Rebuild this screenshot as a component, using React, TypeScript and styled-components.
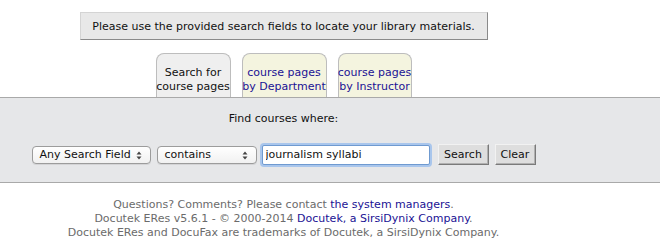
import React from "react"
import styled, { createGlobalStyle } from "styled-components"

const GlobalStyle = createGlobalStyle`
  body {
    margin: 0;
    background: #fff;
    font-family: "DejaVu Sans", Verdana, sans-serif;
    color: #000;
  }
`

const Page = styled.div`
  width: 660px;
`

const Column = styled.div`
  width: 567px;
  display: flex;
  flex-direction: column;
  align-items: center;
`

const Notice = styled.div`
  margin-top: 12px;
  width: 406px;
  height: 26px;
  box-sizing: content-box;
  background: #e8e8e8;
  border: 1px solid;
  border-color: #d4d4d4 #8a8a8a #8a8a8a #d4d4d4;
  display: flex;
  align-items: center;
  justify-content: center;
  white-space: nowrap;
  font-size: 11px;
  color: #111;
`

const Tabs = styled.div`
  margin-top: 13px;
  display: flex;
  gap: 11px;
  align-items: flex-end;
`

const Tab = styled.div<{ $active?: boolean; $w: number }>`
  width: ${(p) => p.$w}px;
  height: 44px;
  border: 1px solid #bdbdbd;
  border-bottom: none;
  border-radius: 8px 8px 0 0;
  background: ${(p) => (p.$active ? "#efefef" : "#f4f4df")};
  color: ${(p) => (p.$active ? "#111" : "#1a1294")};
  font-size: 11px;
  line-height: 14px;
  display: flex;
  align-items: flex-end;
  justify-content: center;
  text-align: center;
  padding-bottom: 3px;
  box-sizing: border-box;
  white-space: nowrap;
`

const Panel = styled.div`
  background: #e6e7e9;
  border-top: 1px solid #a9a9a9;
  border-bottom: 1px solid #a9a9a9;
  height: 84px;
`

const PanelInner = styled(Column)`
  padding-top: 14px;
`

const Prompt = styled.div`
  font-size: 11px;
  color: #111;
  margin-bottom: 19px;
`

const Controls = styled.div`
  display: flex;
  align-items: center;
  gap: 6px;
`

const SelectBox = styled.div<{ $w: number }>`
  position: relative;
  width: ${(p) => p.$w}px;
  height: 18px;
  box-sizing: border-box;
  border: 1px solid #9c9c9c;
  border-radius: 4px;
  background: linear-gradient(#ffffff, #f1f1f1);
  box-shadow: 0 1px 0 rgba(0, 0, 0, 0.08);
  font-size: 11px;
  line-height: 16px;
  padding-left: 7px;
  color: #111;
`

const Arrows = styled.svg`
  position: absolute;
  right: 8px;
  top: 4px;
`

const SearchInput = styled.input`
  width: 168px;
  height: 20px;
  box-sizing: border-box;
  border: 1px solid #6f9ad0;
  box-shadow: 0 0 0 2px #a9c6ec;
  border-radius: 2px;
  font-family: inherit;
  font-size: 11px;
  padding: 0 3px;
  margin: 0 2px 0 -1px;
  outline: none;
  color: #111;
`

const Button = styled.button<{ $w: number }>`
  width: ${(p) => p.$w}px;
  height: 21px;
  padding: 0;
  background: #dedede;
  border: 1px solid;
  border-color: #f2f2f2 #7a7a7a #7a7a7a #f2f2f2;
  box-shadow: inset -1px -1px 0 #b0b0b0;
  font-family: inherit;
  font-size: 11px;
  color: #111;
`

const Footer = styled(Column)`
  margin-top: 15px;
  font-size: 11px;
  line-height: 14px;
  color: #6b6b6b;
  text-align: center;
`

const Link = styled.a`
  color: #1a1294;
  text-decoration: none;
`

function SelectArrows() {
  return (
    <Arrows width="6" height="9" viewBox="0 0 6 9">
      <path d="M0.5 3.5 L3 0.5 L5.5 3.5 Z M0.5 5.5 L3 8.5 L5.5 5.5 Z" fill="#444" />
    </Arrows>
  )
}

export default function App() {
  return (
    <Page>
      <GlobalStyle />
      <Column>
        <Notice>Please use the provided search fields to locate your library materials.</Notice>
        <Tabs>
          <Tab $active $w={75}>
            Search for
            <br />
            course pages
          </Tab>
          <Tab $w={85}>
            course pages
            <br />
            by Department
          </Tab>
          <Tab $w={74}>
            course pages
            <br />
            by Instructor
          </Tab>
        </Tabs>
      </Column>
      <Panel>
        <PanelInner>
          <Prompt>Find courses where:</Prompt>
          <Controls>
            <SelectBox $w={119}>
              Any Search Field
              <SelectArrows />
            </SelectBox>
            <SelectBox $w={100}>
              contains
              <SelectArrows />
            </SelectBox>
            <SearchInput defaultValue="journalism syllabi" />
            <Button $w={51}>Search</Button>
            <Button $w={41}>Clear</Button>
          </Controls>
        </PanelInner>
      </Panel>
      <Footer>
        <div>
          Questions? Comments? Please contact <Link href="#">the system managers</Link>.
        </div>
        <div>
          Docutek ERes v5.6.1 - © 2000-2014 <Link href="#">Docutek, a SirsiDynix Company</Link>.
        </div>
        <div>Docutek ERes and DocuFax are trademarks of Docutek, a SirsiDynix Company.</div>
      </Footer>
    </Page>
  )
}
